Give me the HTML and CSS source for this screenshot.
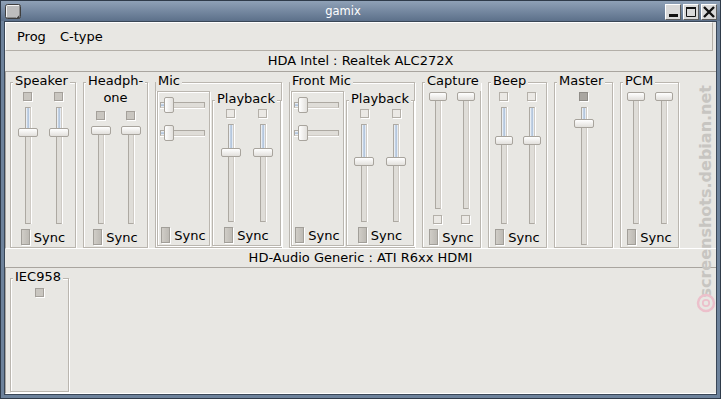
FILE: index.html
```html
<!DOCTYPE html>
<html lang="en">
<head>
  <meta charset="UTF-8">
  <title>gamix</title>
  <link rel="stylesheet" href="styles.css">
</head>
<body>
  <div class="window">
    <div class="titlebar">
      <svg class="app-icon" width="16" height="15" viewBox="0 0 16 15">
        <rect x="0.5" y="0.5" width="15" height="14" rx="2" fill="#bdbdbd" stroke="#3f3f3f"/>
        <path d="M1.5 13V2.5a1 1 0 0 1 1-1H14" fill="none" stroke="#f4f4f4"/>
        <path d="M14.5 2v9.5M2 13.5h9" fill="none" stroke="#8a8a8a"/>
        <path d="M11 14.5l3.5-3.5v3.5z" fill="#3f3f3f"/>
      </svg>
      <span class="title">gamix</span>
      <div class="wm-buttons">
        <span class="wm-btn">
          <svg width="14" height="14" viewBox="0 0 14 14"><rect x="3" y="9" width="9" height="3" fill="#111"/></svg>
        </span>
        <span class="wm-btn">
          <svg width="14" height="14" viewBox="0 0 14 14"><path d="M2.5 3.5h9v8h-9z" fill="none" stroke="#111"/><rect x="2" y="2" width="10" height="2" fill="#111"/></svg>
        </span>
        <span class="wm-btn">
          <svg width="14" height="14" viewBox="0 0 14 14"><path d="M2 2l10 10M12 2L2 12" stroke="#111" stroke-width="2.4"/></svg>
        </span>
      </div>
    </div>

    <div class="client">
      <div class="menubar">
        <span class="menu-item">Prog</span>
        <span class="menu-item">C-type</span>
      </div>

      <div class="card-title">HDA Intel : Realtek ALC272X</div>
      <div class="card card-main">

        <fieldset class="group speaker">
          <legend>Speaker</legend>
          <div class="chans">
            <div class="col">
              <span class="mute"></span>
              <div class="vslider" style="--pos:21px"><div class="trough"><div class="fill"></div></div><div class="handle"></div></div>
            </div>
            <div class="col">
              <span class="mute"></span>
              <div class="vslider" style="--pos:21px"><div class="trough"><div class="fill"></div></div><div class="handle"></div></div>
            </div>
          </div>
          <div class="sync"><span class="box"></span>Sync</div>
        </fieldset>

        <fieldset class="group headphone">
          <legend class="two-line">Headph-<span class="wrap">one</span></legend>
          <div class="chans">
            <div class="col">
              <span class="mute"></span>
              <div class="vslider" style="--pos:0px"><div class="trough"><div class="fill"></div></div><div class="handle"></div></div>
            </div>
            <div class="col">
              <span class="mute"></span>
              <div class="vslider" style="--pos:0px"><div class="trough"><div class="fill"></div></div><div class="handle"></div></div>
            </div>
          </div>
          <div class="sync"><span class="box"></span>Sync</div>
        </fieldset>

        <fieldset class="group split mic">
          <legend>Mic</legend>
          <div class="subs">
            <fieldset class="sub rec">
              <div class="hslider" style="--pos:4px"><div class="htrough"><div class="hfill"></div></div><div class="hhandle"></div></div>
              <div class="hslider" style="--pos:4px"><div class="htrough"><div class="hfill"></div></div><div class="hhandle"></div></div>
              <div class="sync"><span class="box"></span>Sync</div>
            </fieldset>
            <fieldset class="sub play">
              <legend>Playback</legend>
              <div class="chans">
                <div class="col">
                  <span class="mute off"></span>
                  <div class="vslider" style="--pos:24px"><div class="trough"><div class="fill"></div></div><div class="handle"></div></div>
                </div>
                <div class="col">
                  <span class="mute off"></span>
                  <div class="vslider" style="--pos:24px"><div class="trough"><div class="fill"></div></div><div class="handle"></div></div>
                </div>
              </div>
              <div class="sync"><span class="box"></span>Sync</div>
            </fieldset>
          </div>
        </fieldset>

        <fieldset class="group split front-mic">
          <legend>Front Mic</legend>
          <div class="subs">
            <fieldset class="sub rec">
              <div class="hslider" style="--pos:4px"><div class="htrough"><div class="hfill"></div></div><div class="hhandle"></div></div>
              <div class="hslider" style="--pos:4px"><div class="htrough"><div class="hfill"></div></div><div class="hhandle"></div></div>
              <div class="sync"><span class="box"></span>Sync</div>
            </fieldset>
            <fieldset class="sub play">
              <legend>Playback</legend>
              <div class="chans">
                <div class="col">
                  <span class="mute off"></span>
                  <div class="vslider" style="--pos:33px"><div class="trough"><div class="fill"></div></div><div class="handle"></div></div>
                </div>
                <div class="col">
                  <span class="mute off"></span>
                  <div class="vslider" style="--pos:33px"><div class="trough"><div class="fill"></div></div><div class="handle"></div></div>
                </div>
              </div>
              <div class="sync"><span class="box"></span>Sync</div>
            </fieldset>
          </div>
        </fieldset>

        <fieldset class="group narrow">
          <legend>Capture</legend>
          <div class="chans">
            <div class="col">
              <div class="vslider" style="--pos:0px"><div class="trough"><div class="fill"></div></div><div class="handle"></div></div>
              <span class="mute off below"></span>
            </div>
            <div class="col">
              <div class="vslider" style="--pos:0px"><div class="trough"><div class="fill"></div></div><div class="handle"></div></div>
              <span class="mute off below"></span>
            </div>
          </div>
          <div class="sync"><span class="box"></span>Sync</div>
        </fieldset>

        <fieldset class="group narrow">
          <legend>Beep</legend>
          <div class="chans">
            <div class="col">
              <span class="mute off"></span>
              <div class="vslider" style="--pos:29px"><div class="trough"><div class="fill"></div></div><div class="handle"></div></div>
            </div>
            <div class="col">
              <span class="mute off"></span>
              <div class="vslider" style="--pos:29px"><div class="trough"><div class="fill"></div></div><div class="handle"></div></div>
            </div>
          </div>
          <div class="sync"><span class="box"></span>Sync</div>
        </fieldset>

        <fieldset class="group master">
          <legend>Master</legend>
          <div class="chans">
            <div class="col">
              <span class="mute dark"></span>
              <div class="vslider" style="--pos:12px"><div class="trough"><div class="fill"></div></div><div class="handle"></div></div>
            </div>
          </div>
        </fieldset>

        <fieldset class="group narrow">
          <legend>PCM</legend>
          <div class="chans">
            <div class="col">
              <div class="vslider" style="--pos:0px"><div class="trough"><div class="fill"></div></div><div class="handle"></div></div>
            </div>
            <div class="col">
              <div class="vslider" style="--pos:0px"><div class="trough"><div class="fill"></div></div><div class="handle"></div></div>
            </div>
          </div>
          <div class="sync"><span class="box"></span>Sync</div>
        </fieldset>

      </div>

      <div class="card-title second">HD-Audio Generic : ATI R6xx HDMI</div>
      <div class="card card-hdmi">
        <fieldset class="group iec">
          <legend>IEC958</legend>
          <div class="chans">
            <div class="col">
              <span class="mute"></span>
            </div>
          </div>
        </fieldset>
      </div>
    </div>

    <!-- site watermark over the right edge -->
    <div class="watermark">screenshots.debian.net</div>
    <svg class="wm-logo" width="20" height="22" viewBox="0 0 20 22">
      <circle cx="10" cy="11" r="8" fill="none" stroke="#ecc0cb" stroke-width="2.5"/>
      <circle cx="10" cy="11" r="3.2" fill="none" stroke="#ecc0cb" stroke-width="1.8"/>
    </svg>
  </div>
</body>
</html>
```

FILE: styles.css
```css
* {
  box-sizing: border-box;
}

body {
  margin: 0;
  font-family: "DejaVu Sans", sans-serif;
  font-size: 13px;
  color: #000;
  background: #e8e7e3;
}

.window {
  position: relative;
  width: 721px;
  height: 399px;
  border: 1px solid #2f3b4a;
  background: #6d829b;
  padding: 0 3px 3px;
  display: flex;
  flex-direction: column;
}

/* title bar */

.titlebar {
  height: 20px;
  margin: 0 -3px;
  padding: 0 3px 0 4px;
  display: flex;
  align-items: center;
  background: linear-gradient(#8fa1b7, #5c708a);
}

.app-icon {
  flex: none;
}

.title {
  flex: 1;
  text-align: center;
  color: #fff;
  font-size: 11.5px;
}

.wm-buttons {
  display: flex;
  gap: 2px;
  margin-top: 1px;
}

.wm-btn {
  width: 16px;
  height: 16px;
  display: flex;
  align-items: center;
  justify-content: center;
  background: #d9d9d9;
  border: 1px solid;
  border-color: #fff #5e5e5e #5e5e5e #fff;
}

/* client area */

.client {
  flex: 1;
  min-height: 0;
  border: 1px solid #394656;
  background: #e8e7e3;
  display: flex;
  flex-direction: column;
}

.menubar {
  height: 29px;
  margin-right: 3px;
  padding: 6px 0 0 4px;
  border: 1px solid #b3afa8;
  border-top-color: #fff;
  border-left-color: #fff;
  line-height: 15px;
  display: flex;
}

.menu-item {
  padding: 0 7px;
}

.card-title {
  height: 20px;
  line-height: 20px;
  text-align: center;
}

.card-title.second {
  height: 18px;
  line-height: 18px;
}

.card {
  display: flex;
  gap: 7px;
  padding: 1px 0 0 4px;
  border-top: 1px solid #a9a59f;
  border-left: 1px solid #a9a59f;
  border-bottom: 1px solid #fff;
}

.card-main {
  height: 178px;
}

.card-hdmi {
  flex: 1;
  padding-bottom: 1px;
}

/* frames */

fieldset {
  margin: 0;
  min-width: 0;
  border: 1px solid #bab6af;
  box-shadow: inset 1px 1px 0 #fff, 1px 1px 0 #fff;
  display: flex;
  flex-direction: column;
}

legend {
  margin-left: 2px;
  padding: 0 2px 3px;
  line-height: 15px;
  background: #e8e7e3;
  white-space: nowrap;
}

legend.two-line {
  height: 18px;
  margin-left: 0;
  text-align: center;
}

legend .wrap {
  display: block;
  margin-top: 2px;
}

.group {
  padding: 1px 0 2px;
  width: 59px;
}

.speaker { width: 66px; }
.headphone { width: 65px; padding-top: 20px; }
.mic { width: 127px; }
.front-mic { width: 126px; }

.group.split {
  padding: 0 0 1px 1px;
}

.group.split > legend {
  margin-left: -1px;
}

.subs {
  flex: 1;
  display: flex;
  gap: 2px;
}

.sub {
  padding: 0 0 2px;
}

.sub.rec {
  width: 53px;
  padding-top: 5px;
}

.sub.play {
  flex: 1;
}

.chans {
  flex: 1;
  min-height: 0;
  display: flex;
  justify-content: center;
}

.col {
  width: 28px;
  display: flex;
  flex-direction: column;
  align-items: center;
}

.speaker .col { width: 31px; }
.headphone .col { width: 30px; }
.play .col { width: 32px; }

.mute {
  flex: none;
  width: 9px;
  height: 9px;
  margin-bottom: 6px;
  border: 1px solid #a4a09a;
  background: #c9c6c0;
  box-shadow: 1px 1px 0 #fff;
}

.mute.off {
  background: #ebe9e5;
  border-color: #b4b0a9;
}

.mute.dark {
  background: #a9a6a1;
  border-color: #8f8c87;
}

.mute.below {
  margin: 6px 0 0;
}

.sync {
  flex: none;
  height: 16px;
  margin-top: 5px;
  display: flex;
  align-items: center;
  justify-content: center;
  gap: 4px;
  line-height: 15px;
}

.sub.rec .sync {
  margin-top: auto;
}

.sync .box {
  width: 9px;
  height: 16px;
  border: 1px solid #a29f99;
  background: linear-gradient(to right, #d0cdc7, #bdbab4);
  box-shadow: 1px 1px 0 #fff;
}

/* sliders */

.vslider {
  position: relative;
  flex: 1;
  width: 20px;
  display: flex;
  justify-content: center;
}

.trough {
  width: 6px;
  height: 100%;
  border: 1px solid #ada9a2;
  border-right-color: #cfcbc5;
  background: #dfddd8;
  box-shadow: 1px 0 0 #fff;
}

.fill {
  height: var(--pos);
  background: linear-gradient(to right, #fcfcfc, #a6bcd7 55%, #fcfcfc);
}

.handle {
  position: absolute;
  top: var(--pos);
  left: 0;
  width: 20px;
  height: 9px;
  border: 1px solid #a8a49d;
  border-radius: 2px;
  background: linear-gradient(#ffffff, #e2e0dc);
}

.narrow .vslider,
.narrow .handle {
  width: 18px;
}

.hslider {
  position: relative;
  flex: none;
  width: 45px;
  height: 16px;
  margin: 0 0 12px 2px;
  display: flex;
  align-items: center;
}

.htrough {
  width: 100%;
  height: 6px;
  border: 1px solid #ada9a2;
  border-bottom-color: #cfcbc5;
  background: #dfddd8;
  box-shadow: 0 1px 0 #fff;
  display: flex;
}

.hfill {
  width: var(--pos);
  background: linear-gradient(#fcfcfc, #a6bcd7 55%, #fcfcfc);
}

.hhandle {
  position: absolute;
  top: 0;
  left: var(--pos);
  width: 10px;
  height: 16px;
  border: 1px solid #a8a49d;
  border-radius: 2px;
  background: linear-gradient(to right, #ffffff, #e2e0dc);
}

/* watermark */

.watermark {
  position: absolute;
  top: 84px;
  right: 5px;
  writing-mode: vertical-rl;
  transform: rotate(180deg);
  font-size: 16px;
  font-weight: bold;
  line-height: 19px;
  color: #c7c5c1;
}

.wm-logo {
  position: absolute;
  top: 291px;
  right: 4px;
}
```
